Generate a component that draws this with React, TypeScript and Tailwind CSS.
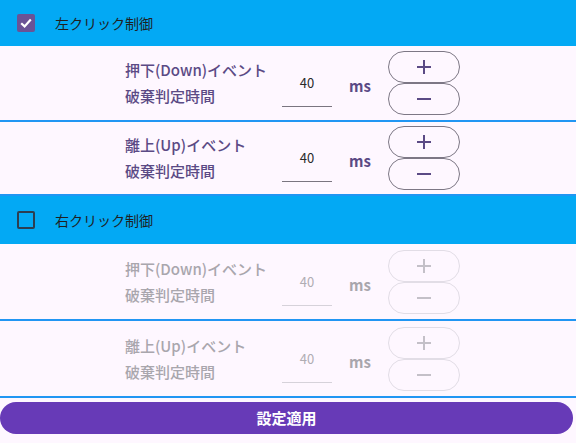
import React from "react";

const font = { fontFamily: '"Noto Sans CJK JP", "Noto Sans", sans-serif' };

function Header({ checked, label, h }: { checked: boolean; label: string; h: string }) {
  return (
    <div className={`flex items-center bg-[#03a9f4] pl-[17px] ${h}`}>
      {checked ? (
        <div className="flex h-[18px] w-[18px] items-center justify-center rounded-[2px] bg-[#6a5396]">
          <svg width="14" height="14" viewBox="0 0 14 14">
            <path d="M2.2 7.2 L5.6 10.4 L11.8 3.6" fill="none" stroke="white" strokeWidth="2.2" />
          </svg>
        </div>
      ) : (
        <div className="h-[18px] w-[18px] rounded-[2px] border-2 border-[#2d3e50]" />
      )}
      <span className="ml-[20px] text-[14px] text-[#1f1f1f]">{label}</span>
    </div>
  );
}

function Row({ title, disabled, h }: { title: string; disabled: boolean; h: string }) {
  const text = disabled ? "text-[#a9a6ad]" : "text-[#5b4a85]";
  const border = disabled ? "border-[#e2dde6]" : "border-[#7d7785]";
  const icon = disabled ? "#c4c0c8" : "#5b4a85";
  return (
    <div className={`flex items-center border-b-2 border-[#2196f3] pl-[125px] ${h}`}>
      <div className={`w-[157px] text-[15px] font-medium leading-[26px] ${text}`}>
        <div>{title}</div>
        <div>破棄判定時間</div>
      </div>
      <div className={`mt-[2px] flex h-[46px] w-[50px] items-start justify-center border-b ${disabled ? "border-[#d6d2da]" : "border-[#7a7580]"} pt-[12px] text-[13px] ${disabled ? "text-[#b0adb3]" : "text-[#2a2a2a]"}`}>
        40
      </div>
      <div className={`ml-[17px] mt-[7px] w-[22px] text-[15px] font-bold ${text}`}>ms</div>
      <div className="ml-[17px] flex flex-col">
        <div className={`flex h-[32px] w-[72px] items-center justify-center rounded-full border ${border}`}>
          <svg width="16" height="16" viewBox="0 0 16 16">
            <path d="M8 1 V15 M1 8 H15" stroke={icon} strokeWidth="2" />
          </svg>
        </div>
        <div className={`flex h-[32px] w-[72px] items-center justify-center rounded-full border ${border}`}>
          <svg width="16" height="16" viewBox="0 0 16 16">
            <path d="M1 8 H15" stroke={icon} strokeWidth="2" />
          </svg>
        </div>
      </div>
    </div>
  );
}

export default function App() {
  return (
    <div className="h-[443px] w-[576px] overflow-hidden bg-[#fef7ff]" style={font}>
      <Header checked label="左クリック制御" h="h-[46px]" />
      <Row title="押下(Down)イベント" disabled={false} h="h-[76px]" />
      <Row title="離上(Up)イベント" disabled={false} h="h-[74px] border-b-0" />
      <Header checked={false} label="右クリック制御" h="h-[48px]" />
      <Row title="押下(Down)イベント" disabled h="h-[77px]" />
      <Row title="離上(Up)イベント" disabled h="h-[77px]" />
      <div className="mr-[3px] mt-[4px] flex h-[32px] items-center justify-center rounded-full bg-[#673ab7] text-[15px] font-bold text-white">
        設定適用
      </div>
    </div>
  );
}
